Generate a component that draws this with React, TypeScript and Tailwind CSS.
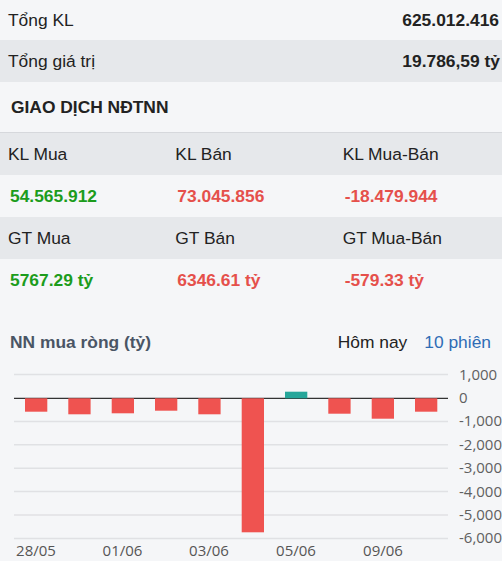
import React from "react";

const bars = [
  { x: 25, v: -13.4 },
  { x: 68.3, v: -16 },
  { x: 111.7, v: -15 },
  { x: 155, v: -12.4 },
  { x: 198.3, v: -16 },
  { x: 241.7, v: -134 },
  { x: 285, v: 6.6 },
  { x: 328.3, v: -15.4 },
  { x: 371.7, v: -20.4 },
  { x: 415, v: -13.4 },
];

const grid = [
  { y: 14.6, label: "1,000" },
  { y: 38.3, label: "0" },
  { y: 61.4, label: "-1,000" },
  { y: 84.8, label: "-2,000" },
  { y: 108.2, label: "-3,000" },
  { y: 131.6, label: "-4,000" },
  { y: 155, label: "-5,000" },
  { y: 178.4, label: "-6,000" },
];

const xLabels = [
  { x: 36, t: "28/05" },
  { x: 122.5, t: "01/06" },
  { x: 209, t: "03/06" },
  { x: 296, t: "05/06" },
  { x: 383, t: "09/06" },
];

export default function App() {
  return (
    <div
      className="w-[502px] h-[561px] overflow-hidden bg-[#f5f6f8] text-[#222] text-[17.4px]"
      style={{ fontFamily: '"Liberation Sans", Arial, sans-serif' }}
    >
      <div className="h-[40px] flex items-center justify-between pl-2 pr-[3px]">
        <span>Tổng KL</span>
        <span className="font-bold">625.012.416</span>
      </div>
      <div className="h-[42px] flex items-center justify-between pl-2 pr-[2px] bg-[#e6e8eb]">
        <span>Tổng giá trị</span>
        <span className="font-bold">19.786,59 tỷ</span>
      </div>
      <div className="h-[51px] flex items-center pl-[11px] font-bold border-b border-[#d6d8dc]">
        GIAO DỊCH NĐTNN
      </div>
      <div className="grid grid-cols-3">
        <div className="h-[42px] flex items-center pl-2 bg-[#e6e8eb]">KL Mua</div>
        <div className="h-[42px] flex items-center pl-2 bg-[#e6e8eb]">KL Bán</div>
        <div className="h-[42px] flex items-center pl-2 bg-[#e6e8eb]">KL Mua-Bán</div>
        <div className="h-[42px] flex items-center pl-[10px] font-bold text-[#1c9c1c]">54.565.912</div>
        <div className="h-[42px] flex items-center pl-[10px] font-bold text-[#e5504b]">73.045.856</div>
        <div className="h-[42px] flex items-center pl-[10px] font-bold text-[#e5504b]">-18.479.944</div>
        <div className="h-[42px] flex items-center pl-2 bg-[#e6e8eb]">GT Mua</div>
        <div className="h-[42px] flex items-center pl-2 bg-[#e6e8eb]">GT Bán</div>
        <div className="h-[42px] flex items-center pl-2 bg-[#e6e8eb]">GT Mua-Bán</div>
        <div className="h-[42px] flex items-center pl-[10px] font-bold text-[#1c9c1c]">5767.29 tỷ</div>
        <div className="h-[42px] flex items-center pl-[10px] font-bold text-[#e5504b]">6346.61 tỷ</div>
        <div className="h-[42px] flex items-center pl-[10px] font-bold text-[#e5504b]">-579.33 tỷ</div>
      </div>
      <div className="pt-[24px] h-[59px] flex items-center justify-between pl-[10px] pr-[11px]">
        <span className="font-bold text-[#4a5565]">NN mua ròng (tỷ)</span>
        <div className="flex items-center gap-[17px]">
          <span>Hôm nay</span>
          <span className="text-[#2f6cb5]">10 phiên</span>
        </div>
      </div>
      <svg width="502" height="201" viewBox="0 0 502 201" className="block">
        {grid.map((g) => (
          <line
            key={g.label}
            x1={14}
            x2={448}
            y1={g.y}
            y2={g.y}
            stroke={g.label === "0" ? "#333" : "#e0e1e4"}
            strokeWidth={g.label === "0" ? 1.2 : 1.5}
          />
        ))}
        {bars.map((b, i) => (
          <rect
            key={i}
            x={b.x}
            width={22.3}
            y={b.v < 0 ? 38.3 : 38.3 - b.v}
            height={Math.abs(b.v)}
            fill={b.v < 0 ? "#ef5350" : "#26a69a"}
          />
        ))}
        {grid.map((g) => (
          <text
            key={"t" + g.label}
            x={459}
            y={g.y + 5}
            fontSize={15}
            fill="#606060"
            fontFamily='"Open Sans", sans-serif'
          >
            {g.label}
          </text>
        ))}
        {xLabels.map((l) => (
          <text
            key={l.t}
            x={l.x}
            y={196}
            fontSize={15}
            textAnchor="middle"
            fill="#555"
            fontFamily='"Open Sans", sans-serif'
          >
            {l.t}
          </text>
        ))}
      </svg>
    </div>
  );
}
